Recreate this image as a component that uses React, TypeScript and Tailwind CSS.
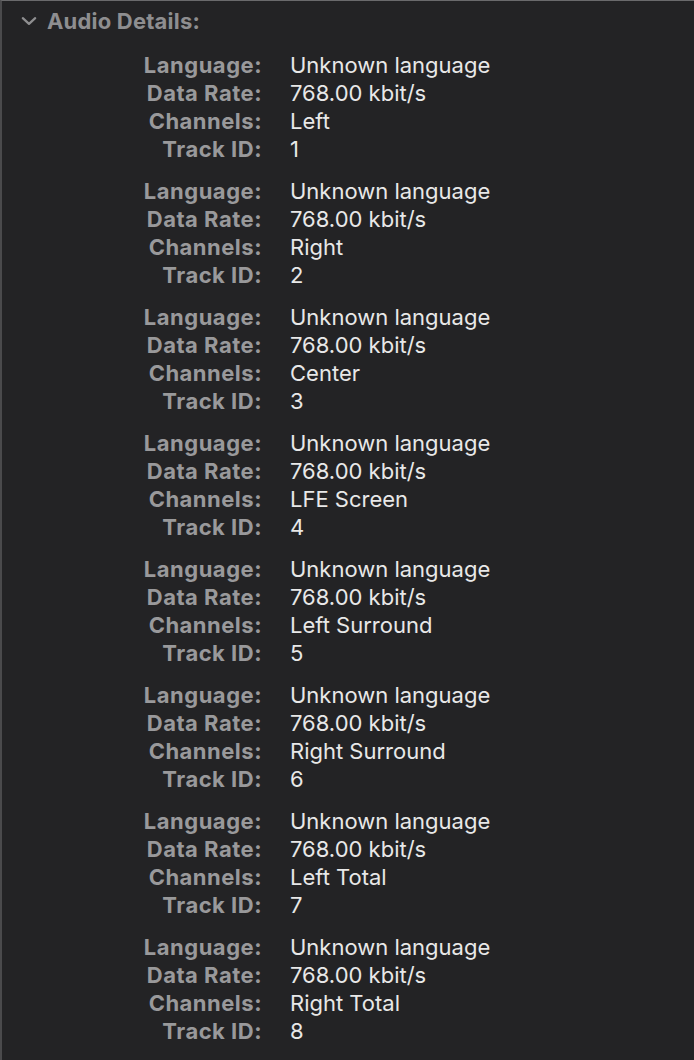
const tracks = [
  { channels: 'Left', id: 1 },
  { channels: 'Right', id: 2 },
  { channels: 'Center', id: 3 },
  { channels: 'LFE Screen', id: 4 },
  { channels: 'Left Surround', id: 5 },
  { channels: 'Right Surround', id: 6 },
  { channels: 'Left Total', id: 7 },
  { channels: 'Right Total', id: 8 },
];

function Row({ label, value }: { label: string; value: string }) {
  return (
    <div className="flex h-[28px] items-center">
      <div className="w-[260px] shrink-0 text-right font-bold tracking-[0.5px] text-[#99999b]">{label}</div>
      <div className="ml-[28px] text-[#e8e8e8]">{value}</div>
    </div>
  );
}

export default function App() {
  return (
    <div
      className="w-[694px] h-[1060px] bg-[#232325] border-t border-t-[#6a6a6c] border-l-2 border-l-[#4a4a4c] text-[22px] leading-[28px] overflow-hidden"
      style={{ fontFamily: 'Inter, "Noto Sans", sans-serif' }}
    >
      <div className="flex h-[40px] items-center pl-[18px]">
        <svg width="18" height="18" viewBox="0 0 16 16" className="text-[#8e8e90]">
          <path d="M2.5 5.5l5.5 5 5.5-5" fill="none" stroke="currentColor" strokeWidth="2" strokeLinecap="round" strokeLinejoin="round" />
        </svg>
        <span className="ml-[9px] font-bold tracking-[0.2px] text-[#8e8e90]">Audio Details:</span>
      </div>
      <div className="mt-[10px]">
        {tracks.map((t) => (
          <div key={t.id} className="mb-[14px]">
            <Row label="Language:" value="Unknown language" />
            <Row label="Data Rate:" value="768.00 kbit/s" />
            <Row label="Channels:" value={t.channels} />
            <Row label="Track ID:" value={String(t.id)} />
          </div>
        ))}
      </div>
    </div>
  );
}
